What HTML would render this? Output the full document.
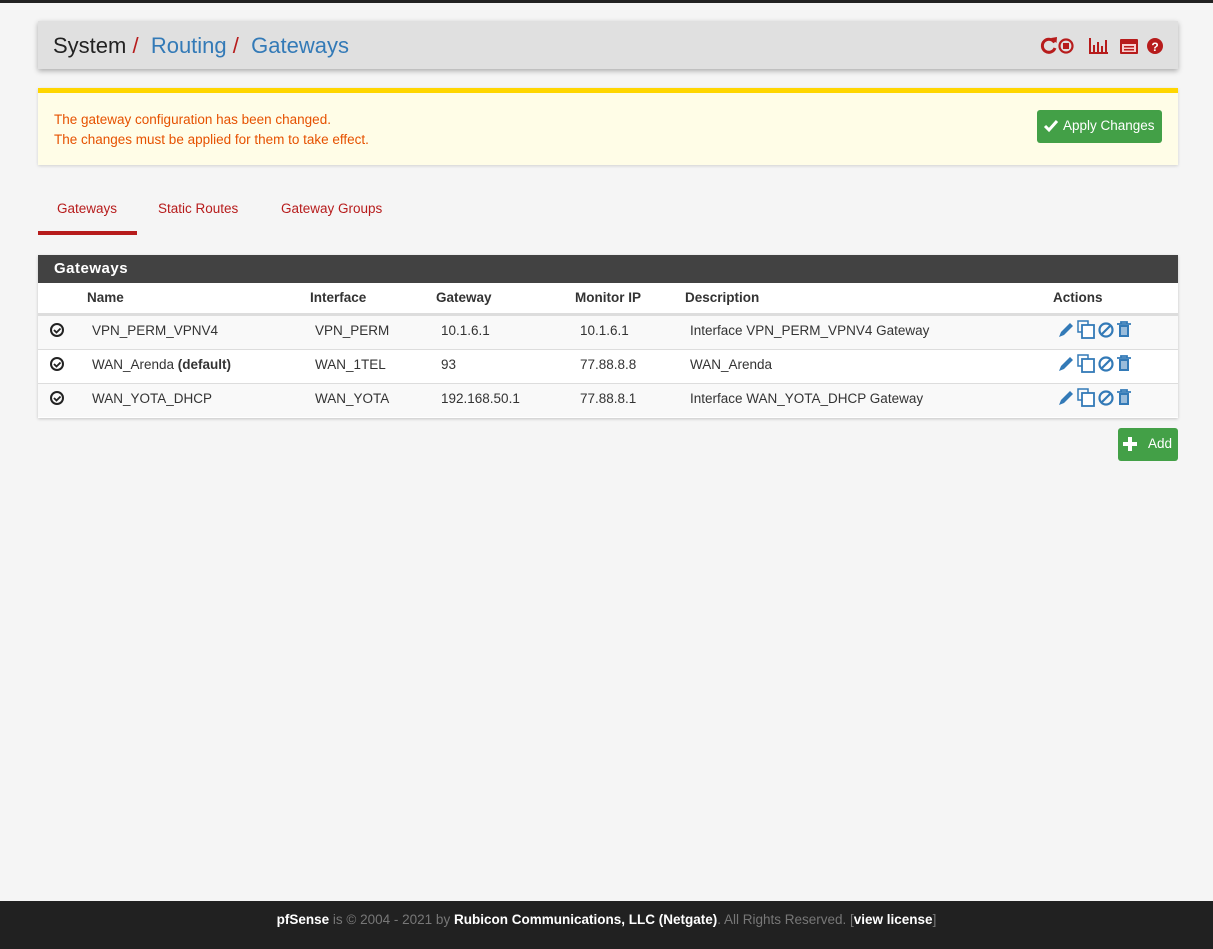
<!DOCTYPE html>
<html><head><meta charset="utf-8"><style>
*{box-sizing:border-box}
body{margin:0;width:1213px;height:949px;background:#f5f5f5;font-family:"Liberation Sans",sans-serif;font-size:13.5px;color:#333;position:relative}
.top{position:absolute;left:0;top:0;width:1213px;height:3px;background:#222}
.hdr{position:absolute;left:38px;top:21px;width:1140px;height:48px;background:#e0e0e0;box-shadow:0 2px 5px rgba(0,0,0,.3)}
.hdr .t{position:absolute;left:15px;top:12px;font-size:22px;color:#222}
.hdr .t a{color:#337ab7}.hdr .t span{color:#b71c1c}
.ic{position:absolute;top:15px;right:0}
.alert{position:absolute;left:38px;top:88px;width:1140px;height:77px;background:#fffde7;border-top:5px solid #ffd600;box-shadow:0 1px 3px rgba(0,0,0,.15);color:#e65100;font-size:13.5px;padding:17px 16px;line-height:20px}
.btn{position:absolute;background:#43a047;color:#fff;border-radius:3px;font-size:13.5px}
.tabs{position:absolute;left:38px;top:201px;font-size:13.5px;color:#b71c1c}
.tabs div{position:absolute;top:0;white-space:nowrap}
.panel{position:absolute;left:38px;top:255px;width:1140px;height:163px;background:#fff;box-shadow:0 1px 3px rgba(0,0,0,.2)}
.ph{height:28px;background:#424242;color:#fff;font-weight:bold;font-size:15px;padding:5px 16px;letter-spacing:.5px}
.row{position:absolute;left:0;width:1140px;height:34px;border-top:1px solid #ddd}
.row div,.th div{position:absolute;top:7px;white-space:nowrap}
.th div{font-weight:bold;top:7px}
.foot{position:absolute;left:0;bottom:0;width:1213px;height:48px;background:#212121;color:#777;text-align:center;line-height:38px;font-size:13.5px}
.foot b{color:#fff}
</style></head><body>
<div class="top"></div>
<div class="hdr"><div class="t">System<span> / </span>&nbsp;<a>Routing</a><span> / </span>&nbsp;<a>Gateways</a></div>
<svg class="ic" width="140" height="20" viewBox="0 0 140 20" fill="#b71c1c">
<path d="M16.5 6.5A6.5 6.5 0 1 0 17 12" stroke="#b71c1c" stroke-width="3" fill="none"/><path d="M13 2l6 -1 -0.5 6z"/>
<circle cx="28" cy="10" r="6.5" stroke="#b71c1c" stroke-width="2.2" fill="none"/><rect x="25" y="7" width="6" height="6"/>
<rect x="51" y="2" width="2" height="16"/><rect x="51" y="16" width="19" height="2"/><rect x="55" y="9" width="2" height="7"/><rect x="59" y="6" width="2" height="10"/><rect x="63" y="10" width="2" height="6"/><rect x="67" y="4" width="2" height="12"/>
<rect x="82" y="3" width="18" height="15" rx="1"/><rect x="84" y="8" width="14" height="8" fill="#f8d0d0"/><rect x="86" y="10" width="10" height="1.5"/><rect x="86" y="13" width="10" height="1.5"/>
<circle cx="117" cy="10" r="8"/><text x="117" y="15" font-size="12" font-weight="bold" fill="#fff" text-anchor="middle" font-family="Liberation Sans">?</text>
</svg></div>
<div class="alert">The gateway configuration has been changed.<br>The changes must be applied for them to take effect.</div>
<div class="btn" style="left:1037px;top:110px;width:125px;height:33px;padding:8px 0 0 26px">Apply Changes</div>
<svg style="position:absolute;left:1043px;top:118px" width="16" height="16"><path d="M2 8l4 4 8-9" stroke="#fff" stroke-width="3" fill="none"/></svg>
<div class="tabs"><div style="left:19px">Gateways</div><div style="left:120px">Static Routes</div><div style="left:243px">Gateway Groups</div></div>
<div style="position:absolute;left:38px;top:231px;width:99px;height:4px;background:#b71c1c"></div>
<div class="panel"><div class="ph">Gateways</div>
<div class="th" style="position:absolute;top:28px;height:32px;width:1140px;border-bottom:2px solid #ddd"><div style="left:49px">Name</div><div style="left:272px">Interface</div><div style="left:398px">Gateway</div><div style="left:537px">Monitor IP</div><div style="left:647px">Description</div><div style="left:1015px">Actions</div></div>
<div class="row" style="top:60px;background:#f9f9f9"><div style="left:54px">VPN_PERM_VPNV4</div><div style="left:277px">VPN_PERM</div><div style="left:403px">10.1.6.1</div><div style="left:542px">10.1.6.1</div><div style="left:652px">Interface VPN_PERM_VPNV4 Gateway</div></div>
<div class="row" style="top:94px"><div style="left:54px">WAN_Arenda <b>(default)</b></div><div style="left:277px">WAN_1TEL</div><div style="left:403px">93</div><div style="left:542px">77.88.8.8</div><div style="left:652px">WAN_Arenda</div></div>
<div class="row" style="top:128px;background:#f9f9f9"><div style="left:54px">WAN_YOTA_DHCP</div><div style="left:277px">WAN_YOTA</div><div style="left:403px">192.168.50.1</div><div style="left:542px">77.88.8.1</div><div style="left:652px">Interface WAN_YOTA_DHCP Gateway</div></div>
</div>
<svg style="position:absolute;left:0;top:0" width="1213" height="420">
<g id="r">
<circle cx="57" cy="330" r="6" stroke="#222" stroke-width="2" fill="none"/><path d="M54 330l2.5 2.5 4-4" stroke="#222" stroke-width="1.8" fill="none"/>
<path d="M1059 337l2-5 9-9 3 3-9 9z" fill="#337ab7"/>
<rect x="1078" y="321" width="10" height="11" fill="none" stroke="#337ab7" stroke-width="1.5"/><rect x="1082" y="325" width="12" height="13" fill="#fff" stroke="#337ab7" stroke-width="1.8"/>
<circle cx="1106" cy="330" r="6.5" stroke="#337ab7" stroke-width="2.2" fill="none"/><path d="M1101.5 334.5l9-9" stroke="#337ab7" stroke-width="2.2"/>
<path d="M1117 324h14M1121 324v-2h6v2" stroke="#337ab7" stroke-width="1.8" fill="none"/><rect x="1119" y="325" width="10" height="12" fill="#337ab7"/><path d="M1122 327v8M1124 327v8M1126 327v8" stroke="#fff" stroke-width="1"/>
</g>
<use href="#r" y="34"/><use href="#r" y="68"/>
</svg>
<div class="btn" style="left:1118px;top:428px;width:60px;height:33px;padding:8px 0 0 30px">Add</div>
<svg style="position:absolute;left:1122px;top:436px" width="16" height="16"><path d="M8 1v14M1 8h14" stroke="#fff" stroke-width="4"/></svg>
<div class="foot"><b>pfSense</b> is © 2004 - 2021 by <b>Rubicon Communications, LLC (Netgate)</b>. All Rights Reserved. [<b>view license</b>]</div>
</body></html>
